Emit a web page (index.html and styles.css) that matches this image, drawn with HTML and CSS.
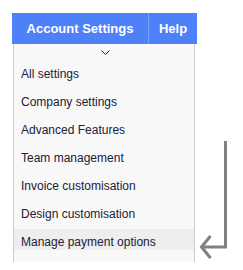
FILE: index.html
```html
<!DOCTYPE html>
<html lang="en">
<head>
    <meta charset="UTF-8">
    <meta name="viewport" content="width=device-width, initial-scale=1.0">
    <title>Account Settings</title>
    <link rel="stylesheet" href="styles.css">
</head>
<body>
    <div class="menu">
        <div class="menu-bar">
            <div class="tab tab-account">Account Settings</div>
            <div class="tab tab-help">Help</div>
        </div>

        <div class="dropdown">
            <svg class="caret" width="9" height="5" viewBox="0 0 9 5" fill="none" stroke="#222" stroke-width="1">
                <polyline points="0.5 0.5 4.5 4.5 8.5 0.5"></polyline>
            </svg>
            <ul class="items">
                <li>All settings</li>
                <li>Company settings</li>
                <li>Advanced Features</li>
                <li>Team management</li>
                <li>Invoice customisation</li>
                <li>Design customisation</li>
                <li class="active">Manage payment options</li>
            </ul>
        </div>
    </div>

    <!-- pointer to the highlighted option -->
    <svg class="pointer" width="32" height="124" viewBox="0 0 32 124" fill="none" stroke="#808080" stroke-width="3">
        <polyline points="27.5 3 27.5 109 4 109"></polyline>
        <polyline points="12.5 98 3.5 109 12.5 120"></polyline>
    </svg>
</body>
</html>
```

FILE: styles.css
```css
* {
    margin: 0;
    padding: 0;
    box-sizing: border-box;
}

body {
    display: flex;
    align-items: flex-start;
    padding: 13px 0 0 12px;
    background: #fff;
    font-family: 'Liberation Sans', Arial, sans-serif;
}

.menu {
    width: 185px;
}

.menu-bar {
    display: flex;
    background: #4d80f9;
}

.tab {
    padding: 8px 0;
    line-height: 15px;
    font-size: 13px;
    font-weight: bold;
    color: #fff;
    text-align: center;
}

.tab-account {
    width: 137px;
    border-right: 1px solid #7ba2fb;
}

.tab-help {
    flex: 1;
}

.dropdown {
    width: 182px;
    margin-left: 1px;
    padding: 6px 0 12px;
    background: #f8f8f8;
    border-left: 1px solid #cfcfcf;
    border-right: 1px solid #cfcfcf;
}

.caret {
    display: block;
    margin: 0 auto 6px;
    position: relative;
    left: 1px;
}

.items {
    list-style: none;
}

.items li {
    padding: 6px 7px 7px;
    line-height: 15px;
    font-size: 12px;
    color: #20203a;
}

.items li.active {
    padding-bottom: 0;
    background: #eeeeee;
}

.pointer {
    margin: 125px 0 0 1px;
}
```
